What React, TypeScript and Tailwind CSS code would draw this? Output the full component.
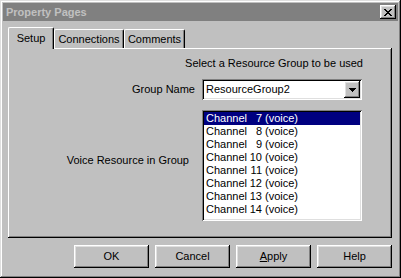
import React from "react";

const raised =
  "shadow-[inset_-1px_-1px_#000000,inset_1px_1px_#ffffff,inset_-2px_-2px_#808080,inset_2px_2px_#dfdfdf]";
const sunken =
  "shadow-[inset_1px_1px_#808080,inset_-1px_-1px_#ffffff,inset_2px_2px_#000000,inset_-2px_-2px_#dfdfdf]";

function Btn({ children }: { children: React.ReactNode }) {
  return (
    <div
      className={`w-[75px] h-[23px] flex items-center justify-center bg-[#c0c0c0] ${raised}`}
    >
      {children}
    </div>
  );
}

const channels = [7, 8, 9, 10, 11, 12, 13, 14];

export default function App() {
  return (
    <div
      className="w-[401px] h-[278px] bg-[#c0c0c0] text-black text-[11px] leading-[13px] overflow-hidden flex flex-col p-[3px] shadow-[inset_-1px_-1px_#000000,inset_1px_1px_#dfdfdf,inset_-2px_-2px_#808080,inset_2px_2px_#ffffff]"
      style={{ fontFamily: '"Liberation Sans", Arial, sans-serif' }}
    >
      {/* Title bar */}
      <div className="h-[18px] bg-[#808080] flex items-center justify-between pl-[3px] pr-[2px]">
        <span className="font-bold text-[#c0c0c0] text-[11px]">Property Pages</span>
        <div
          className={`w-[16px] h-[14px] flex items-center justify-center bg-[#c0c0c0] ${raised}`}
        >
          <svg width="8" height="7" viewBox="0 0 8 7" shapeRendering="crispEdges">
            <path
              d="M0 0h2v1h-2zM6 0h2v1h-2zM1 1h2v1h-2zM5 1h2v1h-2zM2 2h4v1h-4zM3 3h2v1h-2zM2 4h4v1h-4zM1 5h2v1h-2zM5 5h2v1h-2zM0 6h2v1h-2zM6 6h2v1h-2z"
              fill="#000"
            />
          </svg>
        </div>
      </div>

      {/* Tabs */}
      <div className="flex items-end mt-[6px] ml-[5px] h-[21px] relative z-10">
        <div className="relative h-[22px] w-[46px] bg-[#c0c0c0] border-l border-t border-white rounded-tl-[2px] rounded-tr-[2px] flex items-start justify-center pt-[4px] shadow-[inset_-1px_0_#808080] border-r border-r-black -mb-[1px]">
          <span>Setup</span>
        </div>
        <div className="h-[19px] w-[70px] bg-[#c0c0c0] border-t border-l border-white border-r border-r-black rounded-tl-[2px] rounded-tr-[2px] flex items-center justify-center shadow-[inset_-1px_0_#808080] -ml-[0px]">
          <span>Connections</span>
        </div>
        <div className="h-[19px] w-[61px] bg-[#c0c0c0] border-t border-l border-white border-r border-r-black rounded-tl-[2px] rounded-tr-[2px] flex items-center justify-center shadow-[inset_-1px_0_#808080]">
          <span>Comments</span>
        </div>
      </div>

      {/* Panel */}
      <div className="ml-[5px] w-[384px] h-[190px] bg-[#c0c0c0] shadow-[inset_-1px_-1px_#000000,inset_1px_1px_#ffffff,inset_-2px_-2px_#808080] flex flex-col pt-[9px]">
        <div className="flex justify-end pr-[29px]">
          <span>Select a Resource Group to be used</span>
        </div>
        <div className="flex items-center mt-[9px] h-[21px]">
          <div className="w-[187px] text-right">Group Name</div>
          <div
            className={`ml-[7px] w-[160px] h-[21px] bg-white flex items-center justify-between pl-[4px] pr-[2px] ${sunken}`}
          >
            <span>ResourceGroup2</span>
            <div
              className={`w-[16px] h-[17px] bg-[#c0c0c0] flex items-center justify-center ${raised}`}
            >
              <svg width="7" height="4" viewBox="0 0 7 4" shapeRendering="crispEdges">
                <path d="M0 0h7v1h-7zM1 1h5v1h-5zM2 2h3v1h-3zM3 3h1v1h-1z" fill="#000" />
              </svg>
            </div>
          </div>
        </div>
        <div className="flex mt-[10px]">
          <div className="w-[181px] text-right pt-[44px]">Voice Resource in Group</div>
          <div
            className={`ml-[13px] w-[160px] h-[111px] bg-white p-[2px] ${sunken}`}
          >
            {channels.map((c, i) => (
              <div
                key={c}
                className={`h-[13px] flex items-center pl-[2px] ${
                  i === 0 ? "bg-[#000080] text-white" : ""
                }`}
              >
                <span className="w-[39px]">Channel</span>
                <span className="w-[17px] text-right">{c}</span>
                <span className="ml-[3px]">(voice)</span>
              </div>
            ))}
          </div>
        </div>
      </div>

      {/* Buttons */}
      <div className="flex justify-end gap-[6px] mt-[7px] mr-[6px]">
        <Btn>OK</Btn>
        <Btn>Cancel</Btn>
        <Btn>
          <span>
            <span className="underline">A</span>pply
          </span>
        </Btn>
        <Btn>Help</Btn>
      </div>
    </div>
  );
}
